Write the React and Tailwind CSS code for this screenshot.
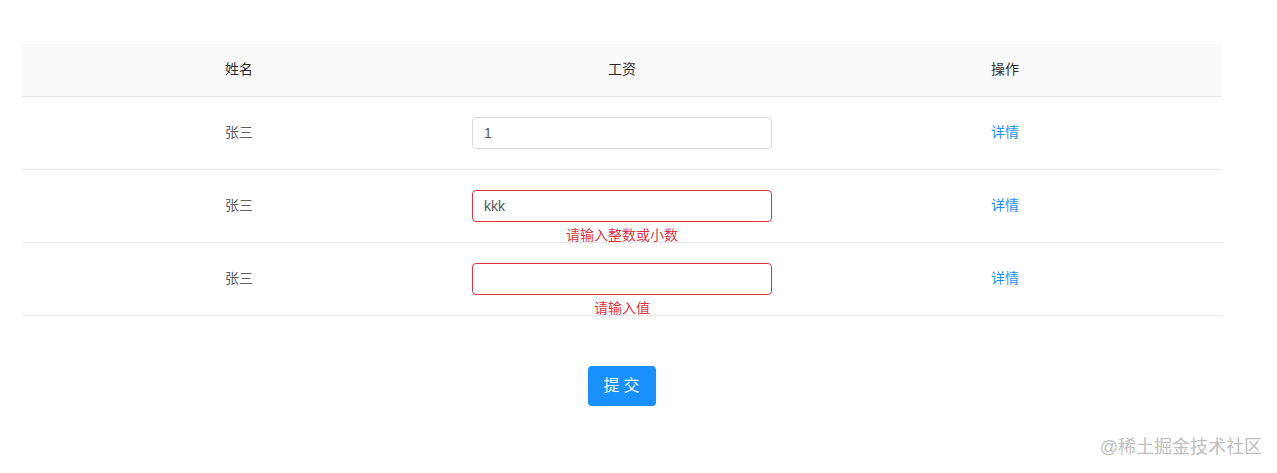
const rows = [
  { name: "张三", value: "1", error: "" },
  { name: "张三", value: "kkk", error: "请输入整数或小数" },
  { name: "张三", value: "", error: "请输入值" },
];

function App() {
  return (
    <div
      className="relative w-[1277px] h-[473px] bg-white"
      style={{ fontFamily: '"Liberation Sans", "Noto Sans CJK SC", sans-serif' }}
    >
      <div className="pt-[44px] pl-[22px] w-[1221px]">
        <table className="w-[1200px] border-collapse text-[14px]">
          <thead>
            <tr className="bg-[#fafafa] border-b border-[#e8e8e8]">
              <th className="w-[434px] h-[52px] font-normal text-[rgba(0,0,0,0.85)]">姓名</th>
              <th className="w-[332px] h-[52px] font-normal text-[rgba(0,0,0,0.85)]">工资</th>
              <th className="h-[52px] font-normal text-[rgba(0,0,0,0.85)]">操作</th>
            </tr>
          </thead>
          <tbody>
            {rows.map((r, i) => (
              <tr key={i} className="border-b border-[#e8e8e8]">
                <td className="h-[73px] text-center text-[#606060]">{r.name}</td>
                <td className="h-[73px] px-4">
                  <div className="relative">
                    <input
                      readOnly
                      value={r.value}
                      className={
                        "w-[300px] h-[32px] px-[11px] rounded-[4px] border text-[14px] text-[#555] outline-none " +
                        (r.error ? "border-[#dc3545]" : "border-[#d9d9d9]")
                      }
                    />
                    {r.error && (
                      <div className="absolute left-0 right-0 top-[36px] text-center text-[14px] leading-[18px] text-[#dc3545]">
                        {r.error}
                      </div>
                    )}
                  </div>
                </td>
                <td className="h-[73px] text-center text-[#1890ff]">详情</td>
              </tr>
            ))}
          </tbody>
        </table>
        <div className="flex justify-center mt-[50px]">
          <button className="w-[68px] h-[40px] rounded-[4px] bg-[#1890ff] text-white text-[16px] tracking-[4px] pl-[4px]">
            提交
          </button>
        </div>
      </div>
      <div className="absolute right-[15px] bottom-[16px] text-[18px] leading-[20px] text-[#c0c0c0]">
        @稀土掘金技术社区
      </div>
    </div>
  );
}

export default App;
